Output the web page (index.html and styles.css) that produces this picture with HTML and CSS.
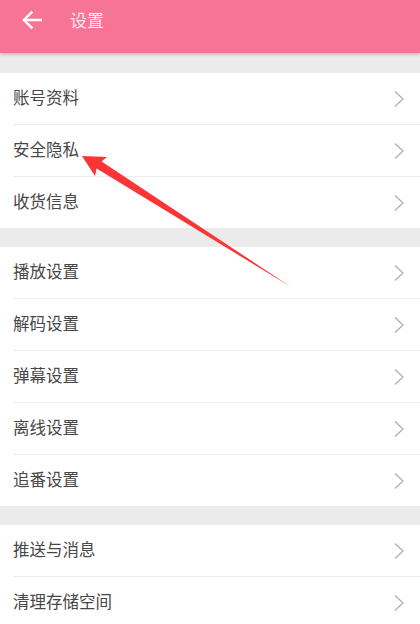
FILE: index.html
```html
<!DOCTYPE html>
<html lang="zh">
<head>
<meta charset="utf-8">
<link rel="stylesheet" href="styles.css">
</head>
<body>
<header class="bar">
  <svg class="back" width="20" height="18" viewBox="0 0 20 18"><path d="M19 9H2M9.5 1.5L2 9l7.5 7.5" fill="none" stroke="#fff" stroke-width="2.4" stroke-linecap="square"/></svg>
  <span class="title">设置</span>
</header>
<main class="content">
  <section class="group">
    <div class="row"><span>账号资料</span><svg class="chev" width="10" height="18" viewBox="0 0 10 18"><path d="M1 1.5L9 9 1 16.5" fill="none" stroke="#b0b0b0" stroke-width="1.3"/></svg></div>
    <div class="row"><span>安全隐私</span><svg class="chev" width="10" height="18" viewBox="0 0 10 18"><path d="M1 1.5L9 9 1 16.5" fill="none" stroke="#b0b0b0" stroke-width="1.3"/></svg></div>
    <div class="row"><span>收货信息</span><svg class="chev" width="10" height="18" viewBox="0 0 10 18"><path d="M1 1.5L9 9 1 16.5" fill="none" stroke="#b0b0b0" stroke-width="1.3"/></svg></div>
  </section>
  <section class="group">
    <div class="row"><span>播放设置</span><svg class="chev" width="10" height="18" viewBox="0 0 10 18"><path d="M1 1.5L9 9 1 16.5" fill="none" stroke="#b0b0b0" stroke-width="1.3"/></svg></div>
    <div class="row"><span>解码设置</span><svg class="chev" width="10" height="18" viewBox="0 0 10 18"><path d="M1 1.5L9 9 1 16.5" fill="none" stroke="#b0b0b0" stroke-width="1.3"/></svg></div>
    <div class="row"><span>弹幕设置</span><svg class="chev" width="10" height="18" viewBox="0 0 10 18"><path d="M1 1.5L9 9 1 16.5" fill="none" stroke="#b0b0b0" stroke-width="1.3"/></svg></div>
    <div class="row"><span>离线设置</span><svg class="chev" width="10" height="18" viewBox="0 0 10 18"><path d="M1 1.5L9 9 1 16.5" fill="none" stroke="#b0b0b0" stroke-width="1.3"/></svg></div>
    <div class="row"><span>追番设置</span><svg class="chev" width="10" height="18" viewBox="0 0 10 18"><path d="M1 1.5L9 9 1 16.5" fill="none" stroke="#b0b0b0" stroke-width="1.3"/></svg></div>
  </section>
  <section class="group">
    <div class="row"><span>推送与消息</span><svg class="chev" width="10" height="18" viewBox="0 0 10 18"><path d="M1 1.5L9 9 1 16.5" fill="none" stroke="#b0b0b0" stroke-width="1.3"/></svg></div>
    <div class="row"><span>清理存储空间</span><svg class="chev" width="10" height="18" viewBox="0 0 10 18"><path d="M1 1.5L9 9 1 16.5" fill="none" stroke="#b0b0b0" stroke-width="1.3"/></svg></div>
  </section>
</main>
<svg class="annot" width="420" height="624" viewBox="0 0 420 624">
  <polygon points="82,156 107,157 101.6,161.4 291,287 96.6,168.6 95,176" fill="#fb3535"/>
</svg>
</body>
</html>
```
FILE: styles.css
```css
html, body {
  margin: 0;
  padding: 0;
}
body {
  width: 420px;
  height: 624px;
  overflow: hidden;
  background: #ebebeb;
  font-family: "Noto Sans CJK SC", "Noto Sans", sans-serif;
  position: relative;
}
.bar {
  box-sizing: content-box;
  height: 40px;
  padding-bottom: 13px;
  background: #f87497;
  display: flex;
  align-items: center;
  box-shadow: 0 1px 4px rgba(0,0,0,0.25);
  position: relative;
  z-index: 1;
}
.back {
  margin-left: 22px;
  display: block;
}
.title {
  margin-left: 28px;
  color: rgba(255,255,255,0.88);
  font-size: 17px;
  line-height: 20px;
}
.content {
  padding-top: 20px;
  display: flex;
  flex-direction: column;
  gap: 19px;
}
.group {
  background: #fff;
  padding-left: 13px;
}
.row {
  box-sizing: border-box;
  height: 52px;
  padding-bottom: 3px;
  display: flex;
  align-items: center;
  justify-content: space-between;
  border-top: 1px solid #ececec;
  padding-right: 16px;
  color: #474747;
  font-size: 16.5px;
}
.row:first-child {
  border-top: none;
  height: 51px;
}
.chev {
  display: block;
  margin-top: 3px;
}
.annot {
  position: absolute;
  left: 0;
  top: 0;
  pointer-events: none;
}
```
